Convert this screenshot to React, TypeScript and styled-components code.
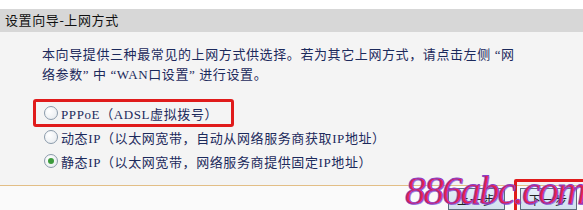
import React from "react";
import styled, { createGlobalStyle } from "styled-components";

const GlobalStyle = createGlobalStyle`
  html, body {
    margin: 0;
    padding: 0;
    background: #ffffff;
  }
  body {
    font-family: "Liberation Serif", "Noto Sans CJK SC", serif;
  }
`;

/* PAGE */

const Page = styled.div`
  position: relative;
  width: 583px;
  height: 210px;
  padding-top: 9px;
  box-sizing: border-box;
  overflow: hidden;
  background: #ffffff;
`;

const Header = styled.div`
  height: 23px;
  padding-left: 5px;
  background: #d7d7d7;
  color: #111;
  font-size: 13px;
  line-height: 23px;
  letter-spacing: 0.6px;
`;

/* CONTENT */

const Content = styled.div`
  display: flex;
  flex-direction: column;
  gap: 16px;
  padding: 13px 0 12px 35px;
  background: #f4f4f4;
  border-bottom: 1px solid #e2be86;
`;

const Intro = styled.p`
  margin: 0 0 0 7px;
  color: #1c2a5c;
  font-size: 13px;
  line-height: 20px;
  letter-spacing: 0.6px;
  white-space: nowrap;
`;

const OptionList = styled.div`
  display: flex;
  flex-direction: column;
  align-items: flex-start;
`;

const Option = styled.label<{ $marked?: boolean }>`
  position: relative;
  display: flex;
  align-items: center;
  gap: 3px;
  height: 24px;
  padding: 0 14px 0 9px;
  color: #1c2a5c;
  font-size: 13px;
  letter-spacing: 0.6px;
  white-space: nowrap;
  cursor: pointer;

  ${({ $marked }) =>
    $marked &&
    `
    &::after {
      content: "";
      position: absolute;
      top: -2px;
      left: -2px;
      right: -2px;
      bottom: -2px;
      border: 3px solid #e01b1b;
      border-radius: 3px;
    }
  `}
`;

const Radio = styled.span<{ $checked?: boolean }>`
  position: relative;
  width: 12px;
  height: 12px;
  border: 1px solid #8b9bab;
  border-radius: 50%;
  background: radial-gradient(circle at 35% 35%, #ffffff 0%, #eceff2 70%, #d8dde3 100%);
  flex-shrink: 0;

  ${({ $checked }) =>
    $checked &&
    `
    &::after {
      content: "";
      position: absolute;
      top: 3px;
      left: 3px;
      width: 6px;
      height: 6px;
      border-radius: 50%;
      background: #3c9a3c;
    }
  `}
`;

/* FOOTER */

const Footer = styled.div`
  display: flex;
  justify-content: flex-end;
  gap: 15px;
  padding: 2px 6px 0 0;
  background: #fafafa;
  height: 24px;
`;

const Button = styled.button<{ $marked?: boolean }>`
  position: relative;
  width: 57px;
  height: 22px;
  padding: 0;
  border: 1px solid #5c6c7c;
  background: linear-gradient(#e4eef8, #d2e0ee);
  color: #222;
  font-family: "Noto Sans CJK SC", sans-serif;
  font-size: 12px;
  letter-spacing: 1px;

  ${({ $marked }) =>
    $marked &&
    `
    &::after {
      content: "";
      position: absolute;
      top: -10px;
      left: -7px;
      right: -14px;
      bottom: -14px;
      border: 3px solid #e01b1b;
      border-radius: 2px;
    }
  `}
`;

const Watermark = styled.div`
  position: absolute;
  top: 170px;
  left: 405px;
  color: #e3234f;
  font-family: "Liberation Serif", serif;
  font-style: italic;
  font-size: 41px;
  line-height: 1;
  letter-spacing: -2px;
  -webkit-text-stroke: 0.8px #8a3fc8;
  text-shadow: 1px 1px 0 rgba(120, 70, 210, 0.6);
  pointer-events: none;
`;

/* DATA */

const options = [
  { label: "PPPoE（ADSL虚拟拨号）", checked: false, marked: true },
  { label: "动态IP（以太网宽带，自动从网络服务商获取IP地址）", checked: false, marked: false },
  { label: "静态IP（以太网宽带，网络服务商提供固定IP地址）", checked: true, marked: false },
];

/* COMPONENT */

const App = () => {
  return (
    <Page>
      <GlobalStyle />
      <Header>设置向导-上网方式</Header>

      <Content>
        <Intro>
          本向导提供三种最常见的上网方式供选择。若为其它上网方式，请点击左侧 “网
          <br />
          络参数” 中 “WAN口设置” 进行设置。
        </Intro>

        <OptionList>
          {options.map((item, idx) => (
            <Option key={idx} $marked={item.marked}>
              <Radio $checked={item.checked} />
              {item.label}
            </Option>
          ))}
        </OptionList>
      </Content>

      <Footer>
        <Button>上一步</Button>
        <Button $marked>下一步</Button>
      </Footer>

      <Watermark>886abc.com</Watermark>
    </Page>
  );
};

export default App;
